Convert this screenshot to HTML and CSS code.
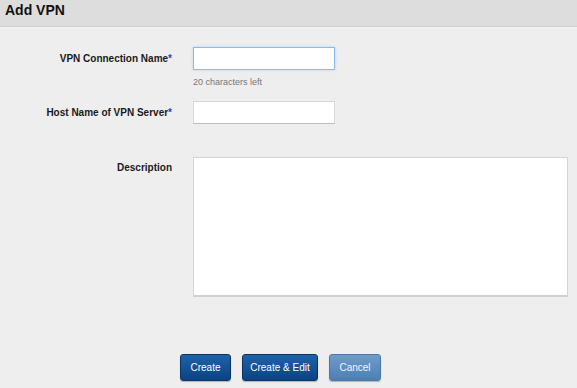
FILE: index.html
```html
<!DOCTYPE html>
<html>
<head>
<meta charset="utf-8">
<link rel="stylesheet" href="styles.css">
</head>
<body>
<div class="header">Add VPN</div>
<form class="form">
  <div class="row row-name">
    <label class="label">VPN Connection Name<span class="req">*</span></label>
    <div class="field">
      <input class="input input-focus" type="text">
      <div class="hint">20 characters left</div>
    </div>
  </div>
  <div class="row row-host">
    <label class="label">Host Name of VPN Server<span class="req">*</span></label>
    <div class="field">
      <input class="input" type="text">
    </div>
  </div>
  <div class="row row-desc">
    <label class="label label-top">Description</label>
    <div class="field">
      <textarea class="textarea"></textarea>
    </div>
  </div>
  <div class="actions">
    <button type="button" class="btn btn-create">Create</button>
    <button type="button" class="btn btn-edit">Create &amp; Edit</button>
    <button type="button" class="btn btn-cancel">Cancel</button>
  </div>
</form>
</body>
</html>
```
FILE: styles.css
```css
* { box-sizing: border-box; }
html, body {
  margin: 0;
  padding: 0;
  background: #eeeeee;
  font-family: "Liberation Sans", Arial, sans-serif;
  color: #222;
}
body { width: 577px; height: 388px; overflow: hidden; }
.header {
  height: 27px;
  background: #dddddd;
  border-bottom: 1px solid #d2d2d2;
  font-size: 14px;
  font-weight: bold;
  line-height: 21px;
  padding-left: 5px;
  color: #111;
}
.form { padding-top: 20px; }
.row {
  display: grid;
  grid-template-columns: 172px 1fr;
  column-gap: 21px;
}
.label {
  text-align: right;
  font-size: 10px;
  font-weight: bold;
  line-height: 23px;
  color: #1a1a1a;
  white-space: nowrap;
}
.label-top { padding-top: 5px; line-height: 12px; }
.req { color: #2244cc; }
.input {
  display: block;
  width: 142px;
  height: 23px;
  margin: 0;
  background: #fff;
  border: 1px solid #d6d6d6;
  border-bottom-color: #bdbdbd;
  border-radius: 0;
  outline: none;
}
.input-focus {
  border: 1px solid #8cbcea;
  box-shadow: 0 0 3px #b9d6f2;
}
.hint {
  font-size: 9px;
  color: #777;
  margin-top: 7px;
  line-height: 11px;
}
.row-host { margin-top: 13px; }
.row-desc { margin-top: 33px; }
.textarea {
  display: block;
  width: 375px;
  height: 140px;
  margin: 0;
  background: #fff;
  border: 1px solid #d4d4d4;
  border-bottom: 2px solid #d0d0d0;
  resize: none;
  outline: none;
}
.actions {
  display: flex;
  gap: 11px;
  padding-left: 180px;
  margin-top: 57px;
}
.btn {
  height: 27px;
  border: 1px solid #0b3466;
  border-radius: 3px;
  font-family: "Liberation Sans", Arial, sans-serif;
  font-size: 10px;
  color: #fff;
  padding: 0;
  background: linear-gradient(#1d63a6, #0c4283);
  box-shadow: 0 1px 1px rgba(0,0,0,0.25);
}
.btn-create { width: 51px; }
.btn-edit { width: 76px; }
.btn-cancel {
  width: 52px;
  background: linear-gradient(#6d9ccb, #4d7fb3);
  border-color: #4a78a8;
  color: #f2f6fb;
}
```
